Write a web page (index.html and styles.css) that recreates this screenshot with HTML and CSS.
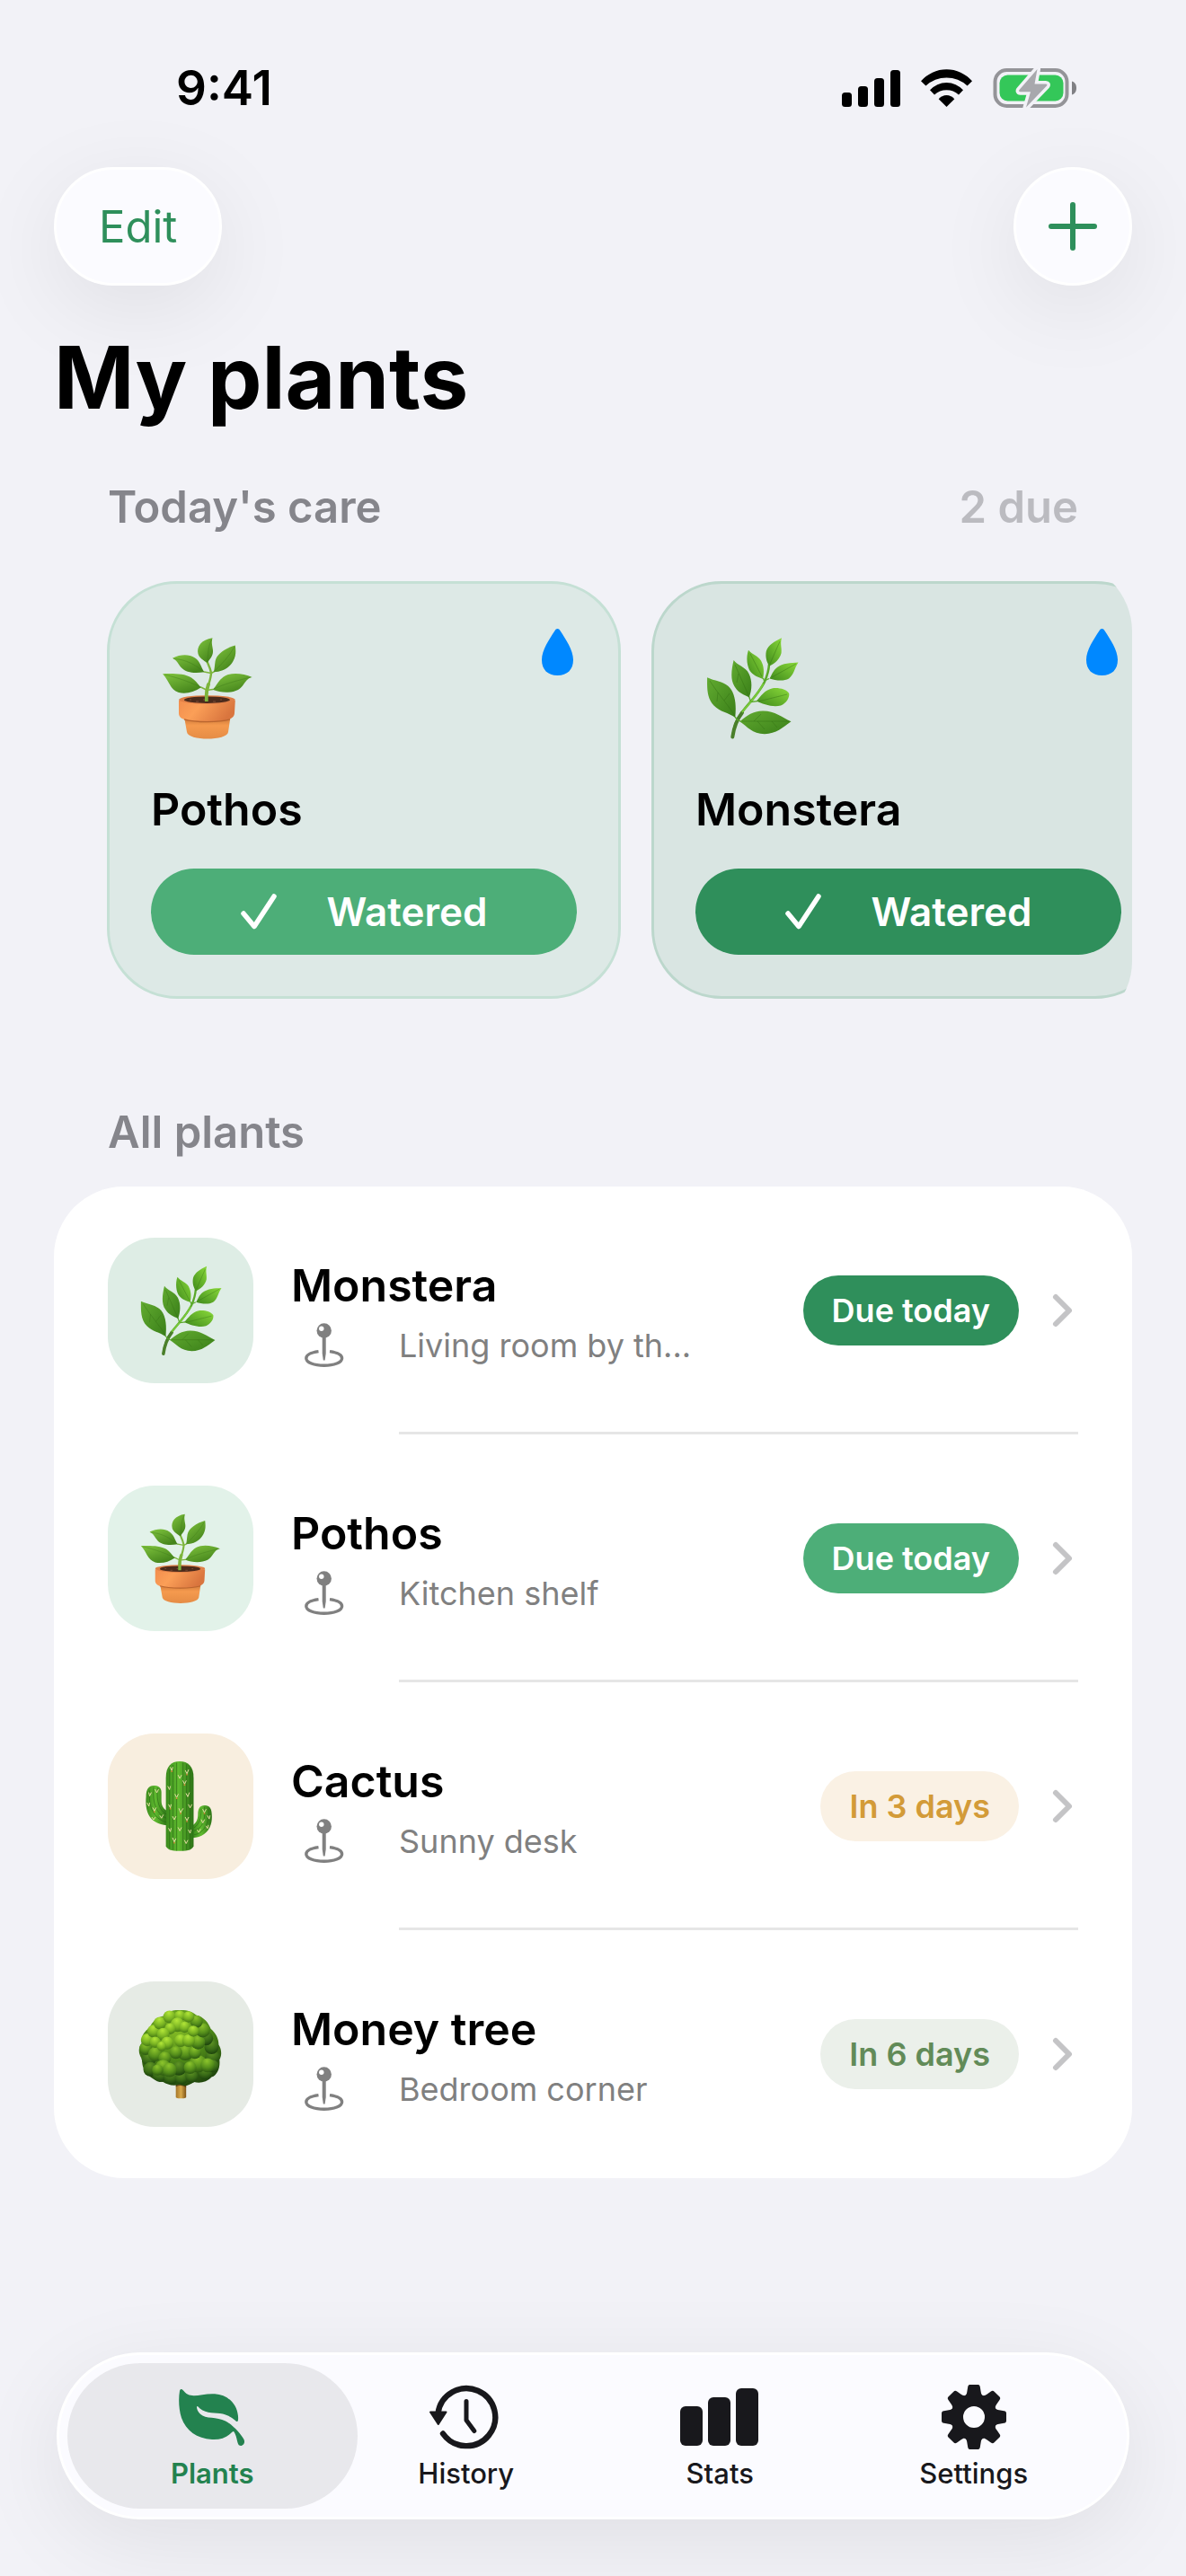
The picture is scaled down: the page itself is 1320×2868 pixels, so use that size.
FILE: index.html
```html
<!DOCTYPE html>
<html lang="en">

<head>
    <meta charset="UTF-8" />
    <meta name="viewport" content="width=device-width, initial-scale=1.0" />
    <title>My plants</title>
    <link rel="stylesheet" href="styles.css">
</head>

<body>
    <!-- Shared drawings -->
    <svg class="defs" width="0" height="0" aria-hidden="true">
        <defs>
            <linearGradient id="leafGrad" x1="0" y1="0" x2="0.6" y2="1">
                <stop offset="0" stop-color="#80c43e" />
                <stop offset="1" stop-color="#46861c" />
            </linearGradient>
            <linearGradient id="leafLight" x1="1" y1="0" x2="0" y2="1">
                <stop offset="0" stop-color="#8ad93a" />
                <stop offset="1" stop-color="#3f8a1b" />
            </linearGradient>
            <linearGradient id="leafDark" x1="0" y1="0" x2="1" y2="1">
                <stop offset="0" stop-color="#62ab30" />
                <stop offset="1" stop-color="#3a7f19" />
            </linearGradient>
            <linearGradient id="potRim" x1="0" y1="0" x2="1" y2="0.3">
                <stop offset="0" stop-color="#f28e4e" />
                <stop offset="0.4" stop-color="#fb9f57" />
                <stop offset="1" stop-color="#d9753e" />
            </linearGradient>
            <linearGradient id="potBody" x1="0" y1="0" x2="0" y2="1">
                <stop offset="0" stop-color="#c87436" />
                <stop offset="0.4" stop-color="#f59a4e" />
                <stop offset="1" stop-color="#e58c45" />
            </linearGradient>
            <linearGradient id="cactusGrad" x1="0" y1="0" x2="1" y2="0">
                <stop offset="0" stop-color="#3a8a1c" />
                <stop offset="0.45" stop-color="#5fba2f" />
                <stop offset="1" stop-color="#2c7216" />
            </linearGradient>
            <linearGradient id="trunkGrad" x1="0" y1="0" x2="1" y2="0">
                <stop offset="0" stop-color="#a5762a" />
                <stop offset="0.5" stop-color="#d9a94a" />
                <stop offset="1" stop-color="#7d5216" />
            </linearGradient>
            <radialGradient id="crown" cx="0.45" cy="0.25" r="0.8">
                <stop offset="0" stop-color="#86bd26" />
                <stop offset="0.5" stop-color="#4f8a18" />
                <stop offset="1" stop-color="#1d420c" />
            </radialGradient>
            <radialGradient id="puffA" cx="0.45" cy="0.2" r="0.8">
                <stop offset="0" stop-color="#b2e638" />
                <stop offset="0.6" stop-color="#78b222" />
                <stop offset="1" stop-color="#457a14" />
            </radialGradient>
            <radialGradient id="puffB" cx="0.45" cy="0.2" r="0.8">
                <stop offset="0" stop-color="#8cc42c" />
                <stop offset="0.6" stop-color="#558f1b" />
                <stop offset="1" stop-color="#2c5a10" />
            </radialGradient>
            <radialGradient id="puffC" cx="0.45" cy="0.2" r="0.8">
                <stop offset="0" stop-color="#5f9424" />
                <stop offset="0.6" stop-color="#3a6c17" />
                <stop offset="1" stop-color="#1c430c" />
            </radialGradient>
        </defs>

        <symbol id="potted" viewBox="0 0 120 120">
            <g fill="none" stroke="#7db53c" stroke-linecap="round">
                <path d="M58.8 72 C58 60 64 52 64 43 C63 38 61.5 35 59.7 31" stroke-width="2.4" />
                <path d="M58.8 72 C58.3 66 59 61 61 56" stroke-width="3.8" />
                <path d="M64 43.5 L56.3 42 M64 43.5 L67 42 M58.6 62 L52.5 59 M58.8 62.5 L66 61.5" stroke-width="1.5" />
            </g>
            <g fill="url(#leafGrad)">
                <path d="M65.5 4.2 C53 6 47.5 14 49.5 22 C51 27 55.5 29 59.7 32 C63 27 66.5 24 66 18 C65.5 13 64 10 65.5 4.2Z" />
                <path d="M90.8 12.4 C80 15.5 70 22 68.6 30 C67.8 35 68 38 66.8 42.2 C76 42 84 38 88.5 30 C92 24 91.5 18 90.8 12.4Z" />
                <path d="M20.9 26.7 C30 22.5 39 22 46 26.5 C52 30.5 52.5 36.5 56.3 42.2 C46 44 36 43 31 37.5 C27 33 26 29 20.9 26.7Z" />
                <path d="M10 44.2 C21 44 34 43.5 42 48.5 C47 51.5 49 56 52.9 59.3 C45 64.5 36 67 28 65 C18 62 17 51 10 44.2Z" />
                <path d="M109.7 47.9 C100 44 88 42 79.5 46.5 C72 51 71 56.5 65.6 61.8 C75 65.5 86 66 94 62 C101 58 102 49 109.7 47.9Z" />
            </g>
            <g fill="none" stroke="#3b7719" stroke-opacity="0.5" stroke-width="0.8">
                <path d="M64.5 6 C60 15 61 23 59.7 31 M90 14 C84 25 76 33 67.5 41.5 M22 27.5 C36 28 46 34 56 42 M12 45 C28 49 40 53 52 59 M108 48 C92 52 80 55 67 61" />
            </g>
            <path d="M34 92 L37 109 C38 119 82 119 83 109 L85.5 92 Z" fill="url(#potBody)" />
            <path d="M28 74 V88 C28 92 31 94 34 95 C46 98 73 98 84 95 C88 93 90 91 90 88 L90.8 74 Z" fill="url(#potRim)" />
            <path d="M34 94.8 C46 98.5 73 98.5 85 94.8" fill="none" stroke="#b9652f" stroke-width="1.4" />
            <ellipse cx="59.4" cy="73" rx="31.4" ry="4.8" fill="#df7f47" />
            <ellipse cx="59.4" cy="73.2" rx="25.5" ry="3.7" fill="#4b2b1c" />
            <path d="M40 73 h2 M47 75 h3 M55 73 h2 M66 75 h3 M74 73 h2" stroke="#7c4d35" stroke-width="1" />
            <path d="M58.8 75 L58.8 68" stroke="#7db53c" stroke-width="3.8" />
        </symbol>

        <symbol id="herb" viewBox="0 0 120 120">
            <path d="M38.3 114.5 C39.5 106 41 97 48 88 C56 77 68 66 74 53 C77 46 78.5 41 79 34" fill="none" stroke="#5aa82a" stroke-width="2.6" stroke-linecap="round" />
            <path d="M38.3 114.5 C39.5 106 41.5 97 49 87.5" fill="none" stroke="#4a7f2a" stroke-width="4" stroke-linecap="round" />
            <path d="M49 87 C57 77 67 67 72.5 55" fill="none" stroke="#79c93a" stroke-width="2" />
            <path d="M72.4 49 L74 53 M79 49.5 L75 51.5 M56.5 69 L58.5 75 M66 74.6 L59 75.5 M41 92 L43.5 95.5 M47 97 L43 95" stroke="#5aa82a" stroke-width="1.3" />
            <g fill="url(#leafLight)">
                <path d="M93 4.2 C85 8 78 12 75.8 19 C74.5 26 76.5 31 79.1 35.6 C85 33 91 28 92.6 21 C93.4 15 91 11 93 4.2Z" />
                <path d="M56 17.7 C53 26 54.5 37 58.5 42 C62 46.5 67.5 48 72.2 49.9 C73.5 42 73.5 36 70 29.5 C67 24 60 23 56 17.7Z" />
                <path d="M111.5 31.6 C103 32 94 32.5 88 37 C83 41 82 45.5 79.5 49.5 C86 51.5 95 53 101 49.5 C107 45 107 38 111.5 31.6Z" />
                <path d="M64.8 74.6 C70 69 74 62 83 60.2 C91 59.5 98 61.5 101.2 66 C102 71 98 77 92 79.6 C83 82 72 78 64.8 74.6Z" />
            </g>
            <g fill="url(#leafDark)">
                <path d="M39.6 29.1 C37 40 35.5 51 41 59 C45 66 51 67 56.8 70.5 C60 62 60.5 52 56.5 44 C53 36.5 43.5 35 39.6 29.1Z" />
                <path d="M10.1 48.3 C10 60 9.5 71 17.5 79.5 C24 86.5 34 87.5 41.2 92.8 C42.5 81 42 68 35.5 60 C30 53 19 52.5 10.1 48.3Z" />
                <path d="M46.3 97.2 C55 90 61 85.8 72 85.4 C86 85.5 93 92.5 103.5 97.3 C94 104 87 111 74 111.2 C60 111 55 103 46.3 97.2Z" />
            </g>
            <g fill="none" stroke="#2f6c12" stroke-opacity="0.5" stroke-width="0.8">
                <path d="M91 8 L80 33 M58 22 L71 47 M109 33 L82 48 M99 67 L67 75 M41 34 L56 68 M13 52 C22 66 34 80 41 91 M49 97 H101" />
                <path d="M22 65 L21 75 M29 74 L35 66 M62 97 L70 89 M66 97 L74 106 M82 97 L88 104 M45 44 L43 54" />
            </g>
        </symbol>

        <symbol id="cactus" viewBox="0 0 120 120">
            <path d="M43 66 C37 62 35.8 58 35.8 52 V42 C35.8 36 31 33.9 26 33.9 C20 34 16.5 38 16.5 48 C15 66 20 82 43 84Z" fill="url(#cactusGrad)" />
            <path d="M75 84 C80 81 81.5 77 81.9 71 C81.9 63 84 59 90.5 59 C96.5 59 99.4 63 99.4 72 C100 88 91 99 75 99.8Z" fill="url(#cactusGrad)" />
            <path d="M41.5 24 C41.5 10 48 3.5 58.8 3.5 S76.4 10 76.4 24 V110 C75 114 71 116.4 59 116.4 S43 114 41.5 110Z" fill="url(#cactusGrad)" />
            <g fill="none" stroke="#276314" stroke-opacity="0.6" stroke-width="1.1">
                <path d="M46 14 V113 M50.5 8 V115 M55 5 V116 M63 5 V116 M67.5 7 V115 M72 13 V113" />
                <path d="M21 40 C19 60 26 76 42 80 M26 36 C24 56 30 70 42 75 M31 37 C29 54 34 66 42 70" />
                <path d="M95 63 C97 82 89 94 77 96 M90 61 C92 78 87 88 77 91 M86 63 C86 76 83 83 77 87" />
            </g>
            <g fill="none" stroke="#e9dfa6" stroke-width="1.1" stroke-linecap="round">
                <path d="M47 11 l2 4 l1 -4 M66 15 l2 4 l2 -5 M57 21 l2 4 l2 -4 M44 35 l2 4 l1 -4 M63 28 l2 4 l2 -4 M53 45 l2 4 l2 -4 M67 44 l2 4 l2 -5 M45 58 l2 4 l1 -4 M58 63 l2 5 l3 -5 M70 58 l2 4 l2 -4 M50 73 l2 4 l2 -4 M66 74 l2 4 l2 -4 M57 87 l2 4 l2 -4 M45 88 l2 4 l1 -4 M70 90 l2 4 l1 -4 M50 100 l2 5 l2 -4 M65 103 l2 4 l2 -4" />
                <path d="M20 43 l1 4 l2 -4 M28 39 l2 4 l2 -4 M18 56 l2 4 l1 -4 M25 62 l2 4 l2 -4 M24 74 l2 3 l2 -3 M34 72 l2 3 l2 -4 M88 64 l2 4 l2 -4 M94 72 l2 4 l1 -4 M86 77 l2 4 l2 -4 M92 85 l2 3 l1 -4 M81 90 l2 3 l2 -4" />
            </g>
            <g fill="#d68a3a">
                <circle cx="49" cy="16" r="1" />
                <circle cx="68" cy="20" r="1" />
                <circle cx="65" cy="33" r="1" />
                <circle cx="55" cy="50" r="1" />
                <circle cx="60" cy="69" r="1" />
                <circle cx="68" cy="79" r="1" />
                <circle cx="47" cy="63" r="1" />
                <circle cx="52" cy="106" r="1" />
                <circle cx="90" cy="69" r="1" />
                <circle cx="27" cy="67" r="1" />
            </g>
        </symbol>

        <symbol id="tree" viewBox="0 0 120 120">
            <path d="M54 90 H67 V114 C67 116.5 54 116.5 54 114Z" fill="url(#trunkGrad)" />
            <path d="M54 92 H67 V102 C63 99 58 99 54 101Z" fill="#3a2c0c" fill-opacity="0.7" />
            <path d="M59 4.5 C67 4 75 6 80 11 C89 13 95 20 98 28 C104 33 108 40 108 48 C112 54 112 62 109 67 C110 76 107 86 99 89 C93 96 83 97 77 95 C70 100 64 101 59 98 C51 101 43 98 38 95 C30 95 20 89 16 82 C11 76 12 70 11 66 C6 58 7 51 11 46 C10 38 14 31 21 27 C24 19 31 13 39 12 C44 6 51 4 59 4.5Z" fill="url(#crown)" />
            <g fill="url(#puffC)">
                <circle cx="20" cy="66" r="9" /><circle cx="22" cy="79" r="9" /><circle cx="34" cy="86" r="9" />
                <circle cx="48" cy="89" r="9" /><circle cx="61" cy="90" r="8" /><circle cx="74" cy="88" r="8" />
                <circle cx="100" cy="64" r="9" /><circle cx="99" cy="51" r="9" /><circle cx="92" cy="40" r="9" />
                <circle cx="91" cy="83" r="9" /><circle cx="58" cy="78" r="9" /><circle cx="100" cy="75" r="8" />
            </g>
            <g fill="url(#puffB)">
                <circle cx="16" cy="53" r="8" /><circle cx="28" cy="60" r="9" /><circle cx="40" cy="65" r="8" />
                <circle cx="82" cy="72" r="11" /><circle cx="94" cy="74" r="9" /><circle cx="72" cy="77" r="8" />
                <circle cx="38" cy="77" r="10" /><circle cx="46" cy="80" r="9" /><circle cx="31" cy="80" r="7" />
                <circle cx="66" cy="58" r="10" /><circle cx="54" cy="58" r="8" /><circle cx="78" cy="58" r="8" />
                <circle cx="82" cy="45" r="9" /><circle cx="88" cy="30" r="9" /><circle cx="80" cy="19" r="8" />
            </g>
            <g fill="url(#puffA)">
                <circle cx="18" cy="42" r="8" /><circle cx="26" cy="31" r="8" /><circle cx="34" cy="21" r="8" />
                <circle cx="46" cy="13" r="8" /><circle cx="59" cy="12" r="7" /><circle cx="70" cy="13" r="7" />
                <circle cx="56" cy="23" r="9" /><circle cx="47" cy="28" r="7" /><circle cx="65" cy="26" r="7" />
                <circle cx="38" cy="35" r="8" /><circle cx="28" cy="45" r="7" /><circle cx="43" cy="46" r="8" />
                <circle cx="60" cy="43" r="8" /><circle cx="70" cy="43" r="8" /><circle cx="76" cy="31" r="7" />
                <circle cx="36" cy="50" r="6" />
            </g>
        </symbol>

        <symbol id="drop" viewBox="0 0 35 52">
            <path d="M17.500 0 C18.8 0 19.6 .8 20.500 2.200 C26.500 11.500 35 23.500 35 34.500 C35 45.500 28.500 52 17.500 52 S0 45.500 0 34.500 C0 23.500 8.500 11.500 14.500 2.200 C15.400 .8 16.200 0 17.500 0Z" fill="#0088ff" />
        </symbol>

        <symbol id="check" viewBox="0 0 40 40">
            <path d="M3 22 L15 36.500 L37 3" fill="none" stroke="currentColor" stroke-width="5.500" stroke-linecap="round" stroke-linejoin="round" />
        </symbol>

        <symbol id="pin" viewBox="0 0 44 50">
            <path d="M15.500 31.600 C7 32.800 1.800 35.500 1.800 39.200 C1.800 44 10.500 47.200 21.700 47.200 S41.600 44 41.600 39.200 C41.600 35.500 36.500 32.800 28 31.600" fill="none" stroke="currentColor" stroke-width="3.400" />
            <path d="M19.700 14 H23.700 V34 L22.600 41.500 H20.800 L19.700 34Z" fill="currentColor" />
            <circle cx="21.700" cy="8.500" r="8.200" fill="currentColor" />
            <circle cx="18.800" cy="6.200" r="2.700" fill="#fff" />
        </symbol>

        <symbol id="chevron" viewBox="0 0 30 42">
            <path d="M5 6 L20 21 L5 36" fill="none" stroke="currentColor" stroke-width="6" stroke-linecap="round" stroke-linejoin="round" />
        </symbol>
    </svg>

    <div class="screen">
        <div class="status-bar">
            <span class="time">9:41</span>
            <div class="status-icons">
                <svg width="65" height="42" viewBox="0 0 65 42" aria-hidden="true">
                    <rect x="0" y="26" width="11" height="16" rx="3.500" />
                    <rect x="18" y="19" width="11" height="23" rx="3.500" />
                    <rect x="36" y="10" width="11" height="32" rx="3.500" />
                    <rect x="54" y="1" width="11" height="41" rx="3.500" />
                </svg>
                <svg width="57" height="42" viewBox="0 0 57 42" aria-hidden="true">
                    <path d="M0 13.300 A37.700 37.700 0 0 1 57 13.300 L51.600 18.600 A33.600 33.600 0 0 0 5.400 18.600Z" />
                    <path d="M10 23.300 A24.800 24.800 0 0 1 47 23.300 L42 28.500 A19.800 19.800 0 0 0 15 28.500Z" />
                    <path d="M19.700 33.300 A11.200 11.200 0 0 1 37.300 33.300 L28.500 42Z" />
                </svg>
                <svg width="93" height="46" viewBox="0 0 93 46" aria-hidden="true">
                    <rect x="2.500" y="3" width="80" height="40" rx="13" fill="none" stroke="#949498" stroke-width="4" />
                    <path d="M88 15.500 C91.500 16.500 93 19.500 93 23 S91.500 29.500 88 30.500Z" fill="#808084" />
                    <rect x="7.500" y="8.500" width="71" height="29" rx="9" fill="#34c759" />
                    <path d="M49.500 2 L29.500 25 C28.700 26.200 29 27.300 30.500 27.300 H42 L37 44.500 L60 20.500 C60.800 19.300 60.500 18.500 59 18.500 H46.500Z" fill="#a8a8ad" stroke="#f2f2f7" stroke-width="7" stroke-linejoin="round" paint-order="stroke" />
                </svg>
            </div>
        </div>

        <header class="toolbar">
            <button type="button" class="glass edit-btn">Edit</button>
            <button type="button" class="glass add-btn" aria-label="Add plant">
                <svg width="54" height="54" viewBox="0 0 54 54" aria-hidden="true">
                    <path d="M27 3 V51 M3 27 H51" fill="none" stroke="currentColor" stroke-width="6" stroke-linecap="round" />
                </svg>
            </button>
        </header>

        <main>
            <h1>My plants</h1>

            <section>
                <div class="section-head">
                    <h2>Today's care</h2>
                    <span class="count">2 due</span>
                </div>
                <div class="carousel">
                    <article class="care-card light">
                        <div class="care-top">
                            <svg class="emoji"><use href="#potted" /></svg>
                            <svg class="drop"><use href="#drop" /></svg>
                        </div>
                        <h3>Pothos</h3>
                        <button type="button" class="water-btn">
                            <svg width="40" height="40"><use href="#check" /></svg>
                            Watered
                        </button>
                    </article>
                    <article class="care-card dark">
                        <div class="care-top">
                            <svg class="emoji"><use href="#herb" /></svg>
                            <svg class="drop"><use href="#drop" /></svg>
                        </div>
                        <h3>Monstera</h3>
                        <button type="button" class="water-btn">
                            <svg width="40" height="40"><use href="#check" /></svg>
                            Watered
                        </button>
                    </article>
                </div>
            </section>

            <section class="all-plants">
                <div class="section-head">
                    <h2>All plants</h2>
                </div>
                <ul class="plant-list">
                    <li>
                        <a href="#monstera" class="plant-row">
                            <span class="tile tile-monstera"><svg><use href="#herb" /></svg></span>
                            <span class="plant-info">
                                <span class="plant-name">Monstera</span>
                                <span class="plant-place"><svg><use href="#pin" /></svg>Living room by th...</span>
                            </span>
                            <span class="badge badge-dark">Due today</span>
                            <svg class="chevron"><use href="#chevron" /></svg>
                        </a>
                    </li>
                    <li>
                        <a href="#pothos" class="plant-row">
                            <span class="tile tile-pothos"><svg><use href="#potted" /></svg></span>
                            <span class="plant-info">
                                <span class="plant-name">Pothos</span>
                                <span class="plant-place"><svg><use href="#pin" /></svg>Kitchen shelf</span>
                            </span>
                            <span class="badge badge-light">Due today</span>
                            <svg class="chevron"><use href="#chevron" /></svg>
                        </a>
                    </li>
                    <li>
                        <a href="#cactus-plant" class="plant-row">
                            <span class="tile tile-cactus"><svg><use href="#cactus" /></svg></span>
                            <span class="plant-info">
                                <span class="plant-name">Cactus</span>
                                <span class="plant-place"><svg><use href="#pin" /></svg>Sunny desk</span>
                            </span>
                            <span class="badge badge-sand">In 3 days</span>
                            <svg class="chevron"><use href="#chevron" /></svg>
                        </a>
                    </li>
                    <li>
                        <a href="#money-tree" class="plant-row">
                            <span class="tile tile-tree"><svg><use href="#tree" /></svg></span>
                            <span class="plant-info">
                                <span class="plant-name">Money tree</span>
                                <span class="plant-place"><svg><use href="#pin" /></svg>Bedroom corner</span>
                            </span>
                            <span class="badge badge-sage">In 6 days</span>
                            <svg class="chevron"><use href="#chevron" /></svg>
                        </a>
                    </li>
                </ul>
            </section>
        </main>

        <nav class="tab-bar">
            <a href="#plants" class="tab active" aria-current="page">
                <svg width="76" height="72" viewBox="0 -4 76 72" aria-hidden="true">
                    <path d="M3.800 1 C5.500 1 7 4.500 11 6.800 C18 10.500 29 5.500 41 6.300 C56 7.500 65.500 17 67 31 C67.300 35 67 37.500 65.500 37 C64 36.500 60 31 50 28.600 C42 27 32 28.500 24.500 22.500 C22.500 20.500 22 19.500 21.300 20.200 C20.500 21 21.500 25.500 25 28.800 C31 34.500 43 31.500 53 36.500 C62 41.500 70 51 73.500 57 C75.500 61.500 71.500 64.500 69 63.800 C65.500 63 66.500 55 62.500 48.500 C61.500 47 60.500 48.500 59 50 C53 55.500 46 57.500 38 57 C21 56 9 47 4 33 C1 24 .5 12 2 3 C2.400 1.500 3 1 3.800 1Z" />
                </svg>
                Plants
            </a>
            <a href="#history" class="tab">
                <svg width="84" height="72" viewBox="-42 -36 84 72" aria-hidden="true">
                    <path d="M-31.500 -4 A32 32 0 1 1 -26 18.500" fill="none" stroke="currentColor" stroke-width="6.400" stroke-linecap="round" />
                    <path d="M-40 -5.500 H-22.500 L-31.200 8Z" stroke="currentColor" stroke-width="2" stroke-linejoin="round" />
                    <path d="M0 -17.500 V3.500 L8.800 15.500" fill="none" stroke="currentColor" stroke-width="5" stroke-linecap="round" stroke-linejoin="round" />
                </svg>
                History
            </a>
            <a href="#stats" class="tab">
                <svg width="88" height="72" viewBox="0 -4 88 72" aria-hidden="true">
                    <rect x="0" y="20" width="25" height="44" rx="6" />
                    <rect x="31" y="10" width="25" height="54" rx="6" />
                    <rect x="62" y="0" width="25" height="64" rx="6" />
                </svg>
                Stats
            </a>
            <a href="#settings" class="tab">
                <svg width="72" height="72" viewBox="-36 -36 72 72" aria-hidden="true">
                    <defs>
                        <path id="tooth" d="M-11 -23 C-8.500 -24.500 -8 -26 -7.700 -28 L-6.800 -33.500 C-6.500 -35.500 -5.500 -36 -4 -36 H4 C5.500 -36 6.500 -35.500 6.800 -33.500 L7.700 -28 C8 -26 8.500 -24.500 11 -23Z" />
                    </defs>
                    <circle r="18.700" fill="none" stroke="currentColor" stroke-width="13.400" />
                    <use href="#tooth" />
                    <use href="#tooth" transform="rotate(45)" />
                    <use href="#tooth" transform="rotate(90)" />
                    <use href="#tooth" transform="rotate(135)" />
                    <use href="#tooth" transform="rotate(180)" />
                    <use href="#tooth" transform="rotate(225)" />
                    <use href="#tooth" transform="rotate(270)" />
                    <use href="#tooth" transform="rotate(315)" />
                </svg>
                Settings
            </a>
        </nav>
    </div>
</body>

</html>
```

FILE: styles.css
```css
* {
    box-sizing: border-box;
}

body {
    margin: 0;
    background: #f2f2f7;
    color: #000;
    font-family: Inter, 'Liberation Sans', sans-serif;
    overflow-x: hidden;
}

h1,
h2,
h3,
ul {
    margin: 0;
    padding: 0;
}

a {
    color: inherit;
    text-decoration: none;
}

button {
    border: none;
    padding: 0;
    font-family: inherit;
    cursor: pointer;
}

svg {
    flex-shrink: 0;
}

.defs {
    position: absolute;
}

.screen {
    display: flex;
    flex-direction: column;
    min-height: 100vh;
}

/* Status bar */
.status-bar {
    display: flex;
    justify-content: space-between;
    align-items: center;
    padding: 68px 122px 58px 196px;
}

.time {
    font-size: 53px;
    line-height: 60px;
    font-weight: 600;
}

.status-icons {
    display: flex;
    align-items: center;
    gap: 23px;
}

/* Top buttons */
.toolbar {
    display: flex;
    justify-content: space-between;
    padding: 0 60px;
}

.glass {
    display: flex;
    align-items: center;
    justify-content: center;
    height: 132px;
    border: 3px solid #fff;
    border-radius: 66px;
    background: #fbfbff;
    color: #2e8f5b;
    box-shadow: 0 24px 100px rgba(0, 0, 0, 0.08);
}

.edit-btn {
    padding: 0 47px;
    font-size: 49px;
}

.add-btn {
    width: 132px;
}

h1 {
    padding: 0 60px;
    margin: 42px 0 52px;
    font-size: 96px;
    line-height: 120px;
    font-weight: 700;
}

.section-head {
    display: flex;
    justify-content: space-between;
    padding: 0 120px;
    margin-bottom: 27px;
    font-size: 49px;
    line-height: 66px;
    font-weight: 600;
    color: #85858b;
}

.section-head h2 {
    font-size: inherit;
    font-weight: inherit;
}

.count {
    color: #bbbbc0;
}

/* Today's care */
.carousel {
    display: flex;
    gap: 34px;
    margin: 0 60px;
    padding: 22px 59px 36px;
    border-radius: 78px;
    overflow-x: auto;
    scrollbar-width: none;
}

.care-card {
    flex: 0 0 572px;
    padding: 50px 46px 46px;
    border: 3px solid #c5e0d5;
    border-radius: 78px;
    background: #dde9e6;
}

.care-card.dark {
    border-color: #bcd7cc;
    background: #d9e5e2;
}

.care-top {
    display: flex;
    justify-content: space-between;
    align-items: flex-start;
}

.emoji {
    width: 120px;
    height: 120px;
    margin: 6px 3px;
}

.drop {
    width: 35px;
    height: 52px;
    margin: 0 4px;
}

.care-card h3 {
    margin: 36px 0 33px;
    font-size: 50px;
    line-height: 66px;
    font-weight: 600;
}

.water-btn {
    display: flex;
    align-items: center;
    justify-content: center;
    gap: 56px;
    width: 100%;
    height: 96px;
    border-radius: 48px;
    color: #fff;
    font-size: 44px;
    font-weight: 600;
}

.light .water-btn,
.badge-light {
    background: #4dae78;
}

.dark .water-btn,
.badge-dark {
    background: #2f8f5b;
}

/* All plants */
.all-plants {
    margin-top: 80px;
}

.plant-list {
    margin: 0 60px;
    border-radius: 78px;
    background: #fff;
    list-style: none;
}

.plant-list li:not(:last-child)::after {
    content: "";
    display: block;
    height: 3px;
    margin: -3px 60px 0 384px;
    background: #e6e6e6;
}

.plant-row {
    display: flex;
    align-items: center;
    padding: 57px 60px;
}

.tile {
    display: flex;
    align-items: center;
    justify-content: center;
    width: 162px;
    height: 162px;
    margin-right: 42px;
    border-radius: 52px;
}

.tile svg {
    width: 106px;
    height: 106px;
}

.tile-monstera {
    background: #deede5;
}

.tile-pothos {
    background: #e2f2e9;
}

.tile-cactus {
    background: #f8eedf;
}

.tile-tree {
    background: #e6ebe5;
}

.plant-info {
    display: flex;
    flex: 1;
    flex-direction: column;
    gap: 6px;
}

.plant-name {
    font-size: 50px;
    line-height: 72px;
    font-weight: 600;
}

.plant-place {
    display: flex;
    align-items: center;
    font-size: 36px;
    line-height: 48px;
    color: #808080;
}

.plant-place svg {
    width: 44px;
    height: 50px;
    margin: 0 61px 0 15px;
}

.badge {
    padding: 0 32px;
    border-radius: 39px;
    font-size: 36px;
    line-height: 78px;
    font-weight: 600;
    color: #fff;
}

.badge-sand {
    background: #faf1e4;
    color: #d39b38;
}

.badge-sage {
    background: #ebf0ea;
    color: #628b58;
}

.chevron {
    width: 30px;
    height: 42px;
    margin-left: 36px;
    color: #c4c4c6;
}

/* Bottom tabs */
.tab-bar {
    display: grid;
    grid-template-columns: repeat(4, 1fr);
    margin: auto 63px 63px;
    padding: 9px 29px;
    border: 3px solid #fff;
    border-radius: 93px;
    background: #fbfbff;
    box-shadow: 0 24px 100px rgba(0, 0, 0, 0.08);
}

.tab {
    display: flex;
    flex-direction: column;
    align-items: center;
    gap: 9px;
    margin: 0 -20px;
    padding: 24px 0 21px;
    border-radius: 81px;
    font-size: 31px;
    line-height: 36px;
    font-weight: 500;
    color: #18181c;
}

.tab svg {
    fill: currentColor;
}

.tab.active {
    background: #e8e8ec;
    color: #23824f;
    font-weight: 600;
}
```
